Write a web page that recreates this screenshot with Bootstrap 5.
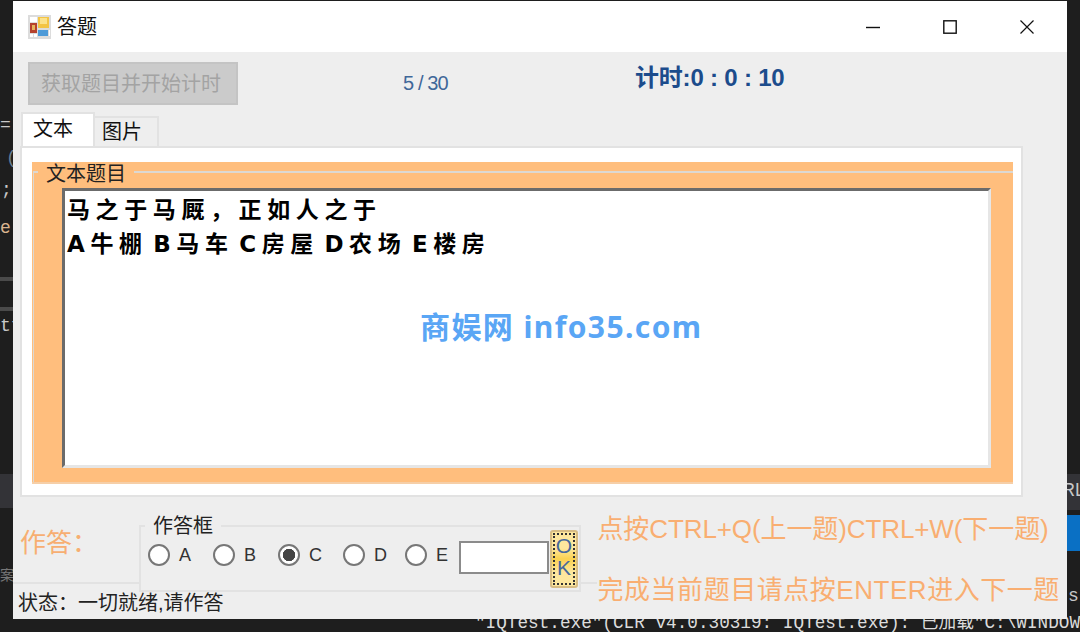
<!DOCTYPE html>
<html lang="zh-CN">
<head>
<meta charset="UTF-8">
<title>答题</title>
<link href="https://cdn.jsdelivr.net/npm/bootstrap@5.3.0/dist/css/bootstrap.min.css" rel="stylesheet">
<style>
html, body { width: 1080px; height: 632px; overflow: hidden; }
body { background: #1e1e1e; font-family: "Liberation Sans", "Noto Sans CJK SC", sans-serif; color: #111; position: relative; }
.desk-bit { position: absolute; color: #c8c8c8; font-family: "Liberation Mono", "Noto Sans CJK SC", monospace; font-size: 18px; line-height: 20px; white-space: nowrap; }
.d-eq { left: 0; top: 115px; }
.d-par { left: 6px; top: 148px; color: #6a7f95; }
.d-semi { left: 1px; top: 180px; }
.d-e { left: 0; top: 218px; color: #d9b48f; }
.d-t { left: 0; top: 316px; }
.d-bar1 { left: 0; top: 277px; width: 13px; height: 4px; background: #4a4a4a; }
.d-bar2 { left: 0; top: 307px; width: 13px; height: 4px; background: #4a4a4a; }
.d-low { left: 0; top: 474px; width: 13px; height: 34px; background: #333337; }
.d-low2 { left: 1067px; top: 474px; width: 13px; height: 36px; background: #333337; }
.d-rl { left: 1062px; top: 480px; font-family: "Liberation Sans", sans-serif; }
.d-blue { left: 1067px; top: 515px; width: 13px; height: 36px; background: #0a70c4; }
.d-s { left: 1068px; top: 586px; }
.d-cjk { left: 0; top: 566px; color: #777; font-size: 14px; }
.d-out { left: 475px; top: 613px; font-size: 17.7px; color: #dcdcdc; }
.app-win { position: absolute; left: 13px; top: 1px; width: 1054px; height: 618px; background: #eee; }
.title-strip { height: 51px; background: #fff; padding-left: 15px; }
.title-text { font-size: 20px; margin-left: 6px; }
.win-btns { padding-right: 2px; }
.win-btn { width: 77px; height: 51px; }
.client { height: 567px; }
.top-strip { height: 60px; padding: 10px 0 0 15px; }
.get-btn { width: 210px; height: 43px; background: #cbcbcb; border: 2px solid #c4c4c4; border-radius: 0; color: #a3a3a3; font-size: 20px; padding: 0 4px 0 0; }
.get-btn:disabled { background: #cbcbcb; border-color: #c4c4c4; color: #a3a3a3; opacity: 1; }
.count-text { margin-left: 165px; width: 45px; color: #3f6799; font-size: 20px; margin-top: 6px; white-space: nowrap; letter-spacing: -.9px; }
.timer-text { margin-left: 187px; color: #1c4c8c; font-size: 24px; font-weight: 700; margin-top: -2px; white-space: nowrap; letter-spacing: -.2px; }
.tab-row { margin-left: 8px; height: 34px; border: 0; align-items: flex-end; }
.tab-row .nav-link { border-radius: 0; color: #111; font-size: 20px; text-align: left; margin: 0; }
.tab-on { width: 74px; height: 34px; padding: 0 0 0 10px; line-height: 30px; background: #fff !important; border: 2px solid #e2e2e2 !important; border-bottom: 0 !important; }
.tab-off { width: 64px; height: 30px; padding: 0 0 0 7px; line-height: 28px; background: #eee; border: 2px solid #e2e2e2 !important; border-left: 0 !important; border-bottom: 0 !important; }
.tab-body { margin-left: 7px; width: 1003px; height: 351px; background: #fff; border: 2px solid #e2e2e2; padding: 14px 8px 11px 10px; }
.orange-box { position: relative; height: 322px; width: 981px; background: #ffbe7d; padding: 26px 22px 14px 30px; border-bottom: 2px solid #f6cfa8; }
.orange-line { position: absolute; left: 1px; right: 0; top: 9px; bottom: 0; border: solid #dcd8d2; border-width: 2px 0 0 1px; }
.orange-tag { position: absolute; left: 6px; top: 0; background: #ffbe7d; padding: 0 8px; font-size: 20px; line-height: 24px; color: #222; }
.text-area { height: 100%; background: #fff; border: solid 3px; border-color: #6b6b6b #e6e6e6 #e6e6e6 #6b6b6b; padding: 2px 0 0 2px; font-family: "DejaVu Sans", "Noto Sans CJK SC", sans-serif; font-weight: 700; color: #000; font-size: 23px; line-height: 34px; letter-spacing: 5.6px; word-spacing: -8px; white-space: pre; }
.mark-text { position: absolute; left: 407px; top: 306px; font-family: "Noto Sans", "Noto Sans CJK SC", sans-serif; font-weight: 700; font-size: 30px; line-height: 40px; color: #5aa6f5; white-space: nowrap; letter-spacing: 1.4px; }
.answer-strip { height: 85px; }
.answer-tag { color: #f7ae72; font-size: 26px; width: 126px; padding: 27px 0 0 7px; }
.answer-group { position: relative; z-index: 1; background: #eee; width: 443px; height: 67px; margin-top: 28px; border: 2px solid #e2e2e2; padding: 16px 0 0 7px; }
.answer-legend { position: absolute; left: 4px; top: -13px; background: #eee; padding: 0 8px; font-size: 20px; line-height: 24px; color: #222; }
.pick-row { height: 24px; }
.pick-item { width: 65px; height: 24px; font-size: 18px; color: #333; }
.pick-item:nth-child(4), .pick-item:nth-child(5) { width: 62px; }
.pick-item .form-check-input { width: 22px; height: 22px; margin: 0 9px 0 0; float: none; flex: none; background: #fff; border: 2px solid #777; }
.pick-item .form-check-input:checked { background: radial-gradient(circle, #444 0 6px, #fff 6.5px); border-color: #777; }
.answer-box { width: 90px; height: 33px; margin-left: -8px; margin-top: 4px; border: 2px solid #8b8b8b; background: #fff; border-radius: 0; padding: 0; }
.ok-btn { position: absolute; left: 409px; top: 3px; width: 28px; height: 58px; border: 2px solid #d8bd84; border-radius: 3px; background: linear-gradient(#fde79e, #fde79e 30%, #fbd14f 50%, #fde79e 75%); padding: 0; color: #46689c; font-size: 21px; line-height: 22px; }
.ok-btn span { display: block; margin: 1px; height: 52px; border: 2px dotted #333; overflow: hidden; }
.tip-col { position: relative; z-index: 1; width: 470px; margin-left: 16px; padding-top: 14px; color: #f9ae71; font-size: 26px; line-height: 36px; white-space: nowrap; letter-spacing: -.1px; }
.tip-second { margin-top: 25px; background: #eee; letter-spacing: .54px; }
.status-strip { height: 37px; border-top: 2px solid #e2e2e2; padding: 7px 0 0 5px; font-size: 20px; line-height: 24px; color: #222; }
</style>
</head>
<body>
<!-- editor behind the window -->
<div class="desk-bit d-eq">=</div>
<div class="desk-bit d-par">(</div>
<div class="desk-bit d-semi">;</div>
<div class="desk-bit d-e">e:</div>
<div class="desk-bit d-bar1"></div>
<div class="desk-bit d-bar2"></div>
<div class="desk-bit d-t">tt</div>
<div class="desk-bit d-low"></div>
<div class="desk-bit d-low2"></div>
<div class="desk-bit d-rl">RL</div>
<div class="desk-bit d-blue"></div>
<div class="desk-bit d-s">s</div>
<div class="desk-bit d-cjk">案序</div>
<div class="desk-bit d-out">"IQTest.exe"(CLR v4.0.30319: IQTest.exe): 已加载"C:\WINDOWS</div>

<div class="app-win">
  <div class="title-strip d-flex align-items-center">
    <svg width="23" height="24" viewBox="0 0 23 24">
      <rect width="23" height="24" fill="#dcdcdc"/>
      <rect x="2" y="2" width="7" height="5" fill="#fff"/>
      <rect x="2" y="8" width="7" height="10" fill="#b5412c"/>
      <rect x="4" y="10" width="3" height="5" fill="#e6b35a"/>
      <rect x="10" y="2" width="11" height="11" fill="#f3c445"/>
      <rect x="12" y="3" width="7" height="6" fill="#fbe28b"/>
      <rect x="10" y="15" width="10" height="6" fill="#4d9ad8"/>
      <rect x="2" y="19" width="3" height="3" fill="#fff"/>
      <rect x="6" y="19" width="3" height="3" fill="#fff"/>
      <rect x="21" y="15" width="1" height="6" fill="#fff"/>
    </svg>
    <span class="title-text">答题</span>
    <div class="ms-auto d-flex win-btns">
      <div class="win-btn d-flex align-items-center justify-content-center">
        <svg width="14" height="14" viewBox="0 0 14 14"><path d="M0 7.5H14" stroke="#111" stroke-width="1.4"/></svg>
      </div>
      <div class="win-btn d-flex align-items-center justify-content-center">
        <svg width="14" height="14" viewBox="0 0 14 14"><rect x=".8" y=".8" width="12.4" height="12.4" fill="none" stroke="#111" stroke-width="1.4"/></svg>
      </div>
      <div class="win-btn d-flex align-items-center justify-content-center">
        <svg width="14" height="14" viewBox="0 0 14 14"><path d="M.5.5 13.5 13.5M13.5.5 .5 13.5" stroke="#111" stroke-width="1.2"/></svg>
      </div>
    </div>
  </div>

  <div class="client">
    <div class="top-strip d-flex align-items-start">
      <button class="btn get-btn" disabled>获取题目并开始计时</button>
      <div class="count-text">5 / 30</div>
      <div class="timer-text">计时:0 : 0 : 10</div>
    </div>

    <ul class="nav nav-tabs tab-row">
      <li class="nav-item"><a class="nav-link tab-on" href="#">文本</a></li>
      <li class="nav-item"><a class="nav-link tab-off" href="#">图片</a></li>
    </ul>
    <div class="tab-body">
      <div class="orange-box">
        <div class="orange-line"></div>
        <div class="orange-tag">文本题目</div>
        <div class="text-area position-relative">马之于马厩，正如人之于
A牛棚 B马车 C房屋 D农场 E楼房</div>
      </div>
    </div>

    <div class="answer-strip d-flex">
      <div class="answer-tag">作答：</div>
      <div class="answer-group">
        <div class="answer-legend">作答框</div>
        <div class="d-flex align-items-center pick-row">
          <label class="pick-item d-flex align-items-center"><input class="form-check-input" type="radio" name="pick">A</label>
          <label class="pick-item d-flex align-items-center"><input class="form-check-input" type="radio" name="pick">B</label>
          <label class="pick-item d-flex align-items-center"><input class="form-check-input" type="radio" name="pick" checked>C</label>
          <label class="pick-item d-flex align-items-center"><input class="form-check-input" type="radio" name="pick">D</label>
          <label class="pick-item d-flex align-items-center"><input class="form-check-input" type="radio" name="pick">E</label>
          <input class="form-control answer-box" type="text">
        </div>
        <button class="btn ok-btn"><span>O<br>K</span></button>
      </div>
      <div class="tip-col">
        <div>点按CTRL+Q(上一题)CTRL+W(下一题)</div>
        <div class="tip-second">完成当前题目请点按ENTER进入下一题</div>
      </div>
    </div>
    <div class="status-strip">状态：一切就绪,请作答</div>
  </div>
  <div class="mark-text">商娱网 info35.com</div>
</div>
<script src="https://cdn.jsdelivr.net/npm/bootstrap@5.3.0/dist/js/bootstrap.bundle.min.js"></script>
</body>
</html>
